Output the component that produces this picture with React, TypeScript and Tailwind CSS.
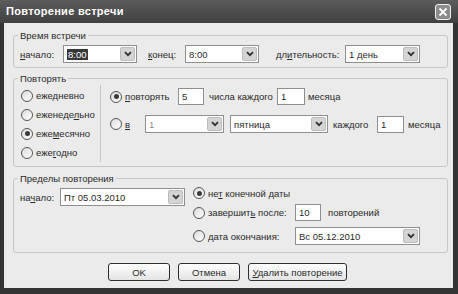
import type { ReactNode } from 'react'

function U({ children }: { children: ReactNode }) {
  return <span className="underline underline-offset-[1px]">{children}</span>
}

function Chevron() {
  return (
    <svg width="8" height="6" viewBox="0 0 8 6">
      <path d="M1 1.2 L4 4.2 L7 1.2" fill="none" stroke="#2f2f2f" strokeWidth="1.8" />
    </svg>
  )
}

function Radio({ checked, children }: { checked?: boolean; children: ReactNode }) {
  return (
    <span className="flex items-center gap-[3px]">
      <span className="flex h-[12px] w-[12px] shrink-0 items-center justify-center rounded-full border border-[#555] bg-linear-to-br from-[#dcdcdc] to-white">
        {checked && <span className="h-[5px] w-[5px] rounded-full bg-[#3a3a3a]" />}
      </span>
      <span>{children}</span>
    </span>
  )
}

function TextBox({ value, className }: { value: string; className: string }) {
  return (
    <div className={`flex h-[17px] shrink-0 items-center border border-[#8f8f8f] bg-white pl-[3px] ${className}`}>
      {value}
    </div>
  )
}

function Combo({ value, className, selected }: { value: string; className: string; selected?: boolean }) {
  return (
    <div className={`flex h-[18px] shrink-0 items-center border border-[#8f8f8f] bg-white pl-[3px] ${className}`}>
      <span className="flex-1 truncate">
        {selected ? <span className="bg-[#383838] px-[1px] text-white">{value}</span> : value}
      </span>
      <span className="mr-[1px] flex h-[14px] w-[15px] items-center justify-center rounded-[2px] border border-[#bcbcbc] bg-[#d4d4d4]">
        <Chevron />
      </span>
    </div>
  )
}

function Button({ children, className }: { children: ReactNode; className: string }) {
  return (
    <div className={`flex h-[18px] items-center justify-center rounded-[3px] border border-[#2e2e2e] bg-linear-to-b from-white to-[#e4e4e4] ${className}`}>
      {children}
    </div>
  )
}

export default function App() {
  return (
    <div className="flex h-[294px] w-[458px] flex-col bg-[#333] font-['Liberation_Sans',Arial,sans-serif] text-[9.5px] leading-[13px] text-[#2a2a2a]">
      {/* title bar */}
      <div className="flex h-[23px] shrink-0 items-center bg-linear-to-b from-[#5c5c5c] to-[#404040] pl-[6px] pr-[7px]">
        <span className="text-[11px] font-bold tracking-[0.3px] text-white">Повторение встречи</span>
        <div className="ml-auto flex h-[16px] w-[16px] items-center justify-center rounded-[3px] border border-[#f0f0f0] bg-[#8c8c8c]">
          <svg width="10" height="10" viewBox="0 0 10 10">
            <path d="M1.5 1.5 L8.5 8.5 M8.5 1.5 L1.5 8.5" stroke="white" strokeWidth="1.8" />
          </svg>
        </div>
      </div>

      <div className="flex flex-1 pb-[6px] pl-[4px] pr-[5px]">
        <div className="flex flex-1 flex-col bg-[#ebebeb] pl-[9px] pr-[5px] pt-[6px]">
          {/* время встречи */}
          <fieldset className="rounded-[3px] border border-[#c6c6c6]">
            <legend className="ml-[4px] px-[2px]">Время встречи</legend>
            <div className="flex items-center pb-[4px] pl-[6px] pt-[3px]">
              <span className="w-[43px]"><U>н</U>ачало:</span>
              <Combo value="8:00" className="w-[74px]" selected />
              <span className="ml-[11px] w-[37px]"><U>к</U>онец:</span>
              <Combo value="8:00" className="w-[74px]" />
              <span className="ml-[17px] w-[69px]">дл<U>и</U>тельность:</span>
              <Combo value="1 день" className="w-[75px]" />
            </div>
          </fieldset>

          {/* повторять */}
          <fieldset className="mt-[4px] rounded-[3px] border border-[#c6c6c6]">
            <legend className="ml-[4px] px-[2px]">Повторять</legend>
            <div className="flex pb-[4px]">
              <div className="w-[87px] border-r border-[#c6c6c6] pl-[7px] pt-[1px]">
                <div className="flex h-[19px] items-center"><Radio>еже<U>д</U>невно</Radio></div>
                <div className="flex h-[19px] items-center"><Radio>еженеде<U>л</U>ьно</Radio></div>
                <div className="flex h-[19px] items-center"><Radio checked>еже<U>м</U>есячно</Radio></div>
                <div className="flex h-[19px] items-center"><Radio>еже<U>г</U>одно</Radio></div>
              </div>
              <div className="pl-[9px] pt-[3px]">
                <div className="flex h-[17px] items-center">
                  <span className="w-[68px]"><Radio checked><U>п</U>овторять</Radio></span>
                  <TextBox value="5" className="w-[26px]" />
                  <span className="ml-[5px] w-[68px]">числа каждого</span>
                  <TextBox value="1" className="w-[28px]" />
                  <span className="ml-[3px]">месяца</span>
                </div>
                <div className="mt-[10px] flex h-[18px] items-center">
                  <span className="w-[35px]"><Radio><U>в</U></Radio></span>
                  <Combo value="1" className="w-[79px] text-[#8a8a8a]" />
                  <Combo value="пятница" className="ml-[6px] w-[98px]" />
                  <span className="ml-[5px] w-[44px]">каждого</span>
                  <TextBox value="1" className="w-[27px]" />
                  <span className="ml-[4px]">месяца</span>
                </div>
              </div>
            </div>
          </fieldset>

          {/* пределы повторения */}
          <fieldset className="mt-[5px] rounded-[3px] border border-[#c6c6c6]">
            <legend className="ml-[4px] px-[2px]">Пределы повторения</legend>
            <div className="flex items-start pb-[7px] pl-[6px]">
              <div className="mt-[3px] flex h-[18px] items-center">
                <span className="w-[40px]">на<U>ч</U>ало:</span>
                <Combo value="Пт 05.03.2010" className="w-[125px]" />
              </div>
              <div className="ml-[8px] flex flex-col">
                <div className="flex h-[16px] items-center"><Radio checked>не<U>т</U> конечной даты</Radio></div>
                <div className="mt-[3px] flex h-[17px] items-center">
                  <span className="w-[102px]"><Radio>завершит<U>ь</U> после:</Radio></span>
                  <TextBox value="10" className="w-[26px]" />
                  <span className="ml-[7px]">повторений</span>
                </div>
                <div className="mt-[6px] flex h-[18px] items-center">
                  <span className="w-[102px]"><Radio><U>д</U>ата окончания:</Radio></span>
                  <Combo value="Вс 05.12.2010" className="w-[125px]" />
                </div>
              </div>
            </div>
          </fieldset>

          {/* кнопки */}
          <div className="ml-[95px] mt-[10px] flex gap-[8px]">
            <Button className="w-[62px]">OK</Button>
            <Button className="w-[62px]">Отмена</Button>
            <Button className="w-[99px]"><span><U>У</U>далить повторение</span></Button>
          </div>
        </div>
      </div>
    </div>
  )
}
